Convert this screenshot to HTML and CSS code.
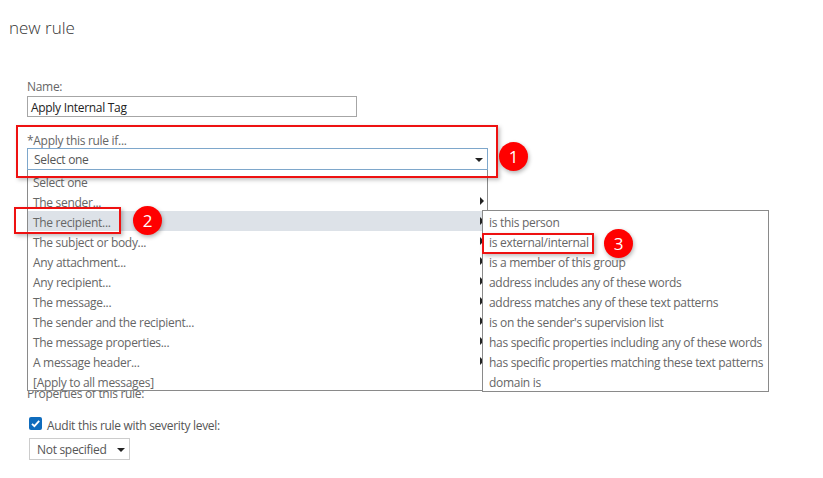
FILE: index.html
```html
<!DOCTYPE html>
<html>
<head>
<meta charset="utf-8">
<link rel="stylesheet" href="styles.css">
</head>
<body>
<div class="page">
  <h1 class="title">new rule</h1>
  <div class="form">
    <div class="field-label">Name:</div>
    <div class="name-input">Apply Internal Tag</div>

    <div class="rule-block">
      <div class="field-label">*Apply this rule if...</div>
      <div class="rule-select">
        <span>Select one</span>
        <span class="caret"></span>
        <div class="menu">
          <div class="item">Select one</div>
          <div class="item sub">The sender...</div>
          <div class="item sub active">The recipient...</div>
          <div class="item sub">The subject or body...</div>
          <div class="item sub">Any attachment...</div>
          <div class="item sub">Any recipient...</div>
          <div class="item sub">The message...</div>
          <div class="item sub">The sender and the recipient...</div>
          <div class="item sub">The message properties...</div>
          <div class="item sub">A message header...</div>
          <div class="item">[Apply to all messages]</div>
          <div class="submenu">
            <div class="sitem">is this person</div>
            <div class="sitem">is external/internal</div>
            <div class="sitem">is a member of this group</div>
            <div class="sitem">address includes any of these words</div>
            <div class="sitem">address matches any of these text patterns</div>
            <div class="sitem">is on the sender's supervision list</div>
            <div class="sitem">has specific properties including any of these words</div>
            <div class="sitem">has specific properties matching these text patterns</div>
            <div class="sitem">domain is</div>
          </div>
        </div>
      </div>
      <div class="hl hl1"></div>
      <div class="badge b1">1</div>
      <div class="hl hl2"></div>
      <div class="badge b2">2</div>
      <div class="hl hl3"></div>
      <div class="badge b3">3</div>
    </div>

    <div class="props">Properties of this rule:</div>
    <div class="audit">
      <span class="check"><svg width="13" height="13" viewBox="0 0 13 13"><path d="M3 6.8 L5.4 9.2 L10.2 3.8" fill="none" stroke="#fff" stroke-width="1.8"/></svg></span>
      <span class="audit-label">Audit this rule with severity level:</span>
    </div>
    <div class="sev-select"><span>Not specified</span><span class="caret"></span></div>
  </div>
</div>
</body>
</html>
```

FILE: styles.css
```css
* { box-sizing: border-box; }
html, body { margin: 0; padding: 0; background: #fff; }
body {
  font-family: "Open Sans", "Noto Sans", sans-serif;
  font-size: 12px;
  letter-spacing: -0.3px;
  color: #666;
  width: 823px;
  height: 478px;
  overflow: hidden;
}
.page { position: relative; padding: 16px 0 0 9px; }
.title {
  margin: 0;
  font-family: "Open Sans", sans-serif;
  font-weight: 300;
  font-size: 17px;
  letter-spacing: 0;
  line-height: 24px;
  color: #333;
}
.form { padding: 38px 0 0 18px; }
.field-label { line-height: 16px; height: 16px; padding-top: 1px; color: #666; }
.name-input {
  margin-top: 2px;
  width: 330px;
  height: 21px;
  border: 1px solid #a6a6a6;
  padding: 1px 3px 0;
  line-height: 19px;
  color: #222;
}
.rule-block { position: relative; margin-top: 15px; }
.rule-select {
  position: relative;
  width: 461px;
  height: 22px;
  border: 1px solid #7ea7cb;
  padding: 1px 6px 0;
  line-height: 20px;
  color: #555;
}
.caret {
  position: absolute;
  right: 4px;
  top: 9px;
  width: 0; height: 0;
  border-left: 4px solid transparent;
  border-right: 4px solid transparent;
  border-top: 4px solid #222;
}
.menu {
  position: absolute;
  left: -1px;
  top: 21px;
  width: 461px;
  height: 221px;
  background: #fff;
  border: 1px solid #8a8a8a;
  border-top: none;
  padding-top: 1px;
  z-index: 2;
}
.item {
  position: relative;
  height: 20px;
  line-height: 20px;
  padding: 2px 0 0 5px;
  color: #666;
}
.item.active { background: #dde2e8; }
.item.sub::after {
  content: "";
  position: absolute;
  right: 3px;
  top: 6px;
  border-top: 4px solid transparent;
  border-bottom: 4px solid transparent;
  border-left: 4px solid #222;
}
.submenu {
  position: absolute;
  left: 454px;
  top: 40px;
  width: 287px;
  height: 182px;
  background: #fff;
  border: 1px solid #8a8a8a;
  z-index: 3;
}
.sitem { height: 20px; line-height: 20px; padding: 2px 0 0 6px; color: #666; white-space: nowrap; }
.hl {
  position: absolute;
  border: 2px solid #ee1111;
  box-shadow: 2px 2px 4px rgba(0,0,0,0.25);
  z-index: 5;
}
.hl1 { left: -11px; top: -7px; width: 482px; height: 53px; }
.hl2 { left: -13px; top: 75px; width: 107px; height: 27px; }
.hl3 { left: 455px; top: 101px; width: 112px; height: 21px; }
.badge {
  position: absolute;
  width: 29px; height: 29px;
  border-radius: 50%;
  background: #f00;
  color: #fff;
  font-family: "Open Sans", sans-serif;
  font-size: 17px;
  letter-spacing: 0;
  line-height: 29px;
  text-align: center;
  box-shadow: 1px 2px 4px rgba(0,0,0,0.3);
  z-index: 6;
}
.b1 { left: 472px; top: 10px; }
.b2 { left: 106px; top: 74px; }
.b3 { left: 577px; top: 97px; }
.props { margin-top: 216px; line-height: 16px; color: #666; }
.audit { display: flex; align-items: flex-start; gap: 5px; margin-top: 14px; padding-left: 2px; line-height: 16px; color: #555; }
.check {
  width: 13px; height: 13px;
  margin-top: 1px;
  background: #0f6cbd;
  border-radius: 2px;
  display: inline-flex;
}
.audit-label { padding-top: 2px; }
.sev-select {
  position: relative;
  margin: 4px 0 0 2px;
  width: 101px;
  height: 22px;
  border: 1px solid #ccc;
  padding: 1px 7px 0;
  line-height: 20px;
  color: #555;
}
```
